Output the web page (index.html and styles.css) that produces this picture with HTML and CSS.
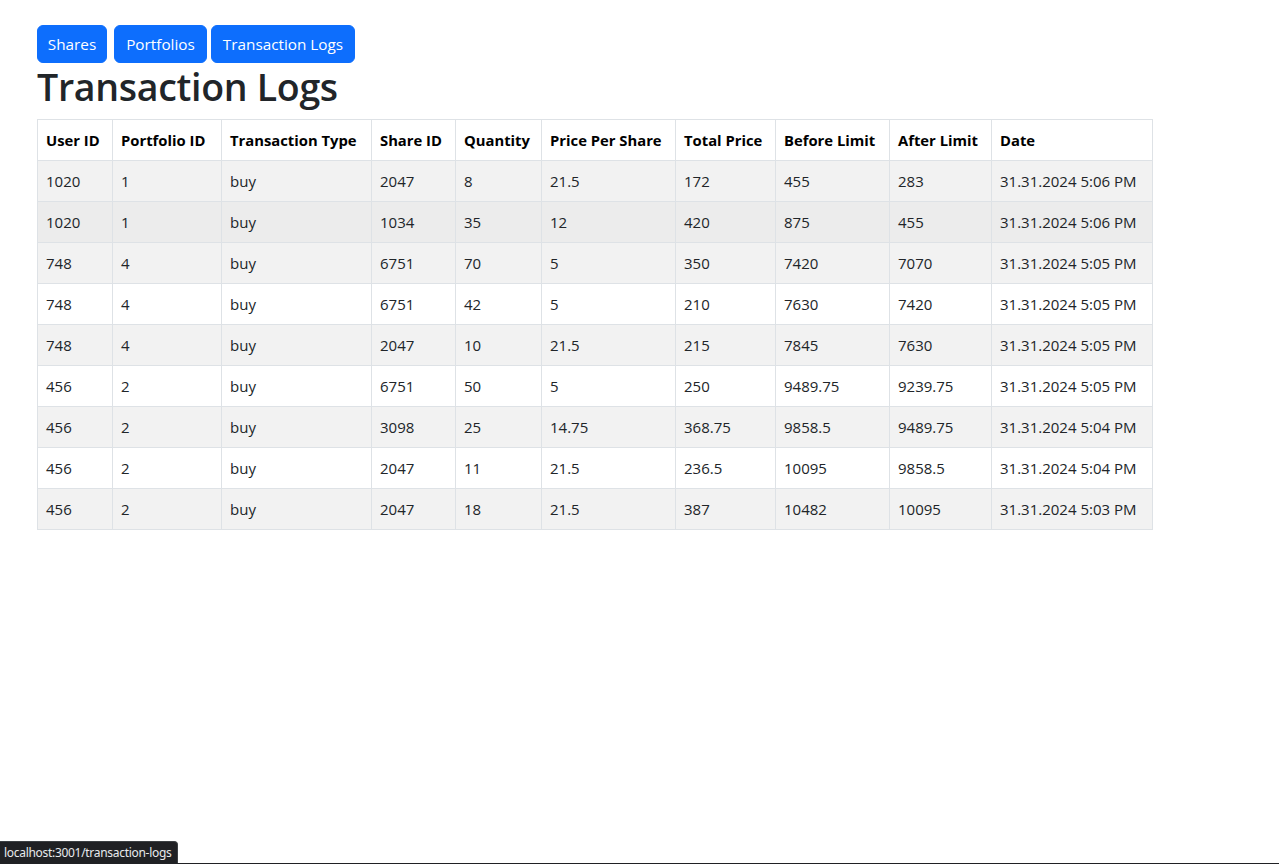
FILE: index.html
```html
<!DOCTYPE html>
<html lang="en">
<head>
<meta charset="utf-8">
<title>Transaction Logs</title>
<link rel="stylesheet" href="styles.css">
</head>
<body>
<div class="page">
  <nav class="nav">
    <a class="btn btn-shares" href="#">Shares</a>
    <a class="btn btn-portfolios" href="#">Portfolios</a>
    <a class="btn btn-logs" href="#">Transaction Logs</a>
  </nav>
  <h1 class="title">Transaction Logs</h1>
  <table class="logs">
    <colgroup>
      <col class="c1"><col class="c2"><col class="c3"><col class="c4"><col class="c5">
      <col class="c6"><col class="c7"><col class="c8"><col class="c9"><col class="c10">
    </colgroup>
    <thead>
      <tr>
        <th>User ID</th><th>Portfolio ID</th><th>Transaction Type</th><th>Share ID</th><th>Quantity</th>
        <th>Price Per Share</th><th>Total Price</th><th>Before Limit</th><th>After Limit</th><th>Date</th>
      </tr>
    </thead>
    <tbody>
      <tr class="odd"><td>1020</td><td>1</td><td>buy</td><td>2047</td><td>8</td><td>21.5</td><td>172</td><td>455</td><td>283</td><td>31.31.2024 5:06 PM</td></tr>
      <tr class="hover"><td>1020</td><td>1</td><td>buy</td><td>1034</td><td>35</td><td>12</td><td>420</td><td>875</td><td>455</td><td>31.31.2024 5:06 PM</td></tr>
      <tr class="odd"><td>748</td><td>4</td><td>buy</td><td>6751</td><td>70</td><td>5</td><td>350</td><td>7420</td><td>7070</td><td>31.31.2024 5:05 PM</td></tr>
      <tr><td>748</td><td>4</td><td>buy</td><td>6751</td><td>42</td><td>5</td><td>210</td><td>7630</td><td>7420</td><td>31.31.2024 5:05 PM</td></tr>
      <tr class="odd"><td>748</td><td>4</td><td>buy</td><td>2047</td><td>10</td><td>21.5</td><td>215</td><td>7845</td><td>7630</td><td>31.31.2024 5:05 PM</td></tr>
      <tr><td>456</td><td>2</td><td>buy</td><td>6751</td><td>50</td><td>5</td><td>250</td><td>9489.75</td><td>9239.75</td><td>31.31.2024 5:05 PM</td></tr>
      <tr class="odd"><td>456</td><td>2</td><td>buy</td><td>3098</td><td>25</td><td>14.75</td><td>368.75</td><td>9858.5</td><td>9489.75</td><td>31.31.2024 5:04 PM</td></tr>
      <tr><td>456</td><td>2</td><td>buy</td><td>2047</td><td>11</td><td>21.5</td><td>236.5</td><td>10095</td><td>9858.5</td><td>31.31.2024 5:04 PM</td></tr>
      <tr class="odd"><td>456</td><td>2</td><td>buy</td><td>2047</td><td>18</td><td>21.5</td><td>387</td><td>10482</td><td>10095</td><td>31.31.2024 5:03 PM</td></tr>
    </tbody>
  </table>
</div>
<div class="status">localhost:3001/transaction-logs</div>
<div class="bottom-line"></div>
</body>
</html>
```
FILE: styles.css
```css
html, body {
  margin: 0;
  padding: 0;
  background: #fff;
}
body {
  font-family: "Open Sans", "Noto Sans", sans-serif;
  font-size: 15px;
  color: #212529;
  height: 864px;
  overflow: hidden;
}
.page {
  padding: 25px 37px 0 37px;
}
.nav {
  display: flex;
  align-items: center;
}
.btn {
  display: inline-block;
  box-sizing: border-box;
  height: 38px;
  line-height: 36px;
  padding: 0;
  border: 1px solid #0d6efd;
  border-radius: 6px;
  background: #0d6efd;
  color: #fff;
  text-decoration: none;
  font-size: 15.3px;
  text-align: center;
  margin-right: 4px;
}
.btn-shares { width: 70px; margin-right: 7px; }
.btn-portfolios { width: 93px; }
.btn-logs { width: 144px; }
.title {
  margin: 0 0 8px 0;
  font-size: 37.5px;
  font-weight: 600;
  line-height: 48px;
  color: #212529;
  letter-spacing: -0.3px;
}
.logs {
  border-collapse: collapse;
  table-layout: fixed;
  width: 1116px;
  color: #212529;
}
.logs th, .logs td {
  border: 1px solid #dee2e6;
  padding: 0 8px;
  height: 40px;
  text-align: left;
  white-space: nowrap;
  overflow: hidden;
  vertical-align: middle;
}
.logs th {
  font-weight: 700;
  color: #000;
  font-size: 14.8px;
}
.logs td {
  font-size: 15px;
}
.logs tr.odd td { background: #f2f2f2; }
.logs tr.hover td { background: #ececec; }
.c1 { width: 75px; }
.c2 { width: 109px; }
.c3 { width: 150px; }
.c4 { width: 84px; }
.c5 { width: 86px; }
.c6 { width: 134px; }
.c7 { width: 100px; }
.c8 { width: 114px; }
.c9 { width: 102px; }
.c10 { width: 161px; }
.status {
  position: fixed;
  left: 0;
  bottom: 0;
  box-sizing: border-box;
  width: 178px;
  height: 23px;
  line-height: 21px;
  padding: 0 0 0 4px;
  background: #202124;
  border: 1px solid #3c4043;
  border-left: none;
  border-bottom: none;
  border-top-right-radius: 4px;
  color: #e8eaed;
  font-family: "Noto Sans", "Open Sans", sans-serif;
  font-size: 12px;
  white-space: nowrap;
  overflow: hidden;
  letter-spacing: -0.3px;
}
.bottom-line {
  position: fixed;
  left: 0;
  right: 0;
  bottom: 0;
  height: 1px;
  background: #202124;
}
```
